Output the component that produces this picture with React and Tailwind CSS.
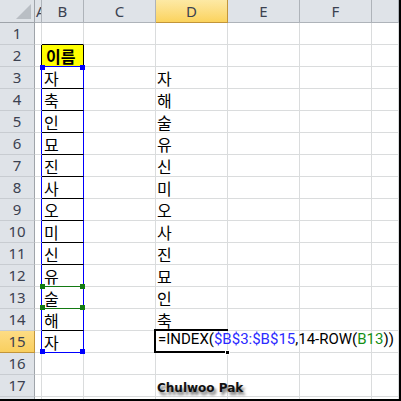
import React from 'react';

const COLS = ['A', 'B', 'C', 'D', 'E', 'F', 'G'];
const colB = { 2: '이름', 3: '자', 4: '축', 5: '인', 6: '묘', 7: '진', 8: '사', 9: '오', 10: '미', 11: '신', 12: '유', 13: '술', 14: '해', 15: '자' };
const colD = { 3: '자', 4: '해', 5: '술', 6: '유', 7: '신', 8: '미', 9: '오', 10: '사', 11: '진', 12: '묘', 13: '인', 14: '축' };

const cellFont = { fontFamily: '"Noto Sans CJK KR", "Noto Sans", sans-serif' };
const uiFont = { fontFamily: '"Noto Sans", sans-serif' };

function Handle({ className }) {
  return <span className={`absolute z-20 h-[5px] w-[5px] ${className}`} />;
}

function Formula() {
  return (
    <span className="relative z-30 whitespace-nowrap text-[15px] leading-none text-black" style={{ fontFamily: 'Roboto, "Noto Sans", "Noto Sans CJK KR", sans-serif' }}>
      =INDEX(<span className="text-[#2b2bff]">$B$3:$B$15</span>,14-ROW(<span className="text-[#168f16]">B13</span>))
    </span>
  );
}

function cellBorder(r, col) {
  if (col === 'A' && r === 2) return 'border-r-black border-b-[#dadcdd]';
  if (col === 'A' && r >= 3 && r <= 15) return 'border-r-[#0000ff] border-b-[#dadcdd]';
  if (col === 'B' && r === 1) return 'border-r-[#dadcdd] border-b-black';
  if (col === 'B' && r === 2) return 'border-r-black border-b-[#0000ff]';
  if (col === 'B' && (r === 12 || r === 13)) return 'border-r-[#0000ff] border-b-[#137a13]';
  if (col === 'B' && r === 15) return 'border-r-[#0000ff] border-b-[#0000ff]';
  if (col === 'B' && r >= 3 && r <= 14) return 'border-r-[#0000ff] border-b-black';
  return 'border-[#dadcdd]';
}

function Cell({ r, col }) {
  let content = null;
  if (col === 'B' && colB[r]) {
    content = (
      <span className={`text-[16px] leading-none ${r === 2 ? 'pl-[4px] font-bold' : 'pl-[2px]'}`} style={cellFont}>
        {colB[r]}
      </span>
    );
  }
  if (col === 'D' && colD[r]) {
    content = (
      <span className="pl-[1px] text-[16px] leading-none" style={cellFont}>
        {colD[r]}
      </span>
    );
  }
  if (col === 'D' && r === 15) content = <span className="pl-[2px]"><Formula /></span>;
  if (col === 'D' && r === 17) {
    content = (
      <span
        className="relative z-10 whitespace-nowrap pl-[1px] text-[12px] font-bold leading-none text-[#111]"
        style={{ fontFamily: '"DejaVu Sans", Tahoma, sans-serif', textShadow: '2px 3px 3px #6b6b6b' }}
      >
        Chulwoo Pak
      </span>
    );
  }

  return (
    <div className={`relative flex items-end border-r border-b pb-[2px] ${cellBorder(r, col)} ${col === 'B' && r === 2 ? 'bg-[#ffff00]' : ''}`}>
      {content}

      {/* range finder handles for $B$3:$B$15 */}
      {col === 'B' && r === 3 && (
        <>
          <Handle className="-left-[2px] -top-[2px] bg-[#0000ff]" />
          <Handle className="-right-[2px] -top-[2px] bg-[#0000ff]" />
        </>
      )}
      {col === 'B' && r === 15 && (
        <>
          <Handle className="-left-[2px] -bottom-[2px] bg-[#0000ff]" />
          <Handle className="-right-[2px] -bottom-[2px] bg-[#0000ff]" />
        </>
      )}

      {/* range finder handles for B13 */}
      {col === 'B' && r === 13 && (
        <>
          <Handle className="-left-[2px] -top-[3px] bg-[#137a13]" />
          <Handle className="-right-[2px] -top-[3px] bg-[#137a13]" />
          <Handle className="-left-[2px] -bottom-[2px] bg-[#137a13]" />
          <Handle className="-right-[2px] -bottom-[2px] bg-[#137a13]" />
        </>
      )}

      {/* active cell (editing, right edge hidden under the text) */}
      {col === 'D' && r === 15 && (
        <>
          <span className="pointer-events-none absolute -bottom-[1px] -left-[2px] -right-[1px] -top-[2px] z-20 border-2 border-r-0 border-black" />
          <span className="absolute -bottom-[3px] -right-[3px] z-30 h-[5px] w-[5px] border border-white bg-black" />
        </>
      )}
    </div>
  );
}

export default function App() {
  const rows = Array.from({ length: 17 }, (_, i) => i + 1);

  return (
    <div className="h-[401px] w-[401px] overflow-hidden border-b-2 border-r-2 border-black bg-white text-black">
      <div className="grid grid-cols-[35px_7px_42px_72px_72px_72px_72px_27px] grid-rows-[23px_repeat(17,22px)_2px]">
        {/* select-all corner */}
        <div className="flex items-end justify-end border-b border-r border-[#9fa4aa] bg-[#dfe3e8] pb-[3px] pr-[3px]">
          <svg width="15" height="15" viewBox="0 0 15 15">
            <polygon points="15,0 15,15 0,15" fill="#b9bec4" />
          </svg>
        </div>

        {/* column headers */}
        {COLS.map((l) => (
          <div
            key={l}
            className={`flex items-center overflow-hidden border-b border-r text-[15px] text-[#3b4150] ${
              l === 'D'
                ? 'border-[#c2953a] bg-gradient-to-b from-[#fde9a4] to-[#fbd35c]'
                : 'border-[#aeb3b9] bg-[#dfe3e8]'
            } ${l === 'A' ? 'justify-start pl-[1px]' : 'justify-center'}`}
            style={uiFont}
          >
            {l === 'G' ? '' : l}
          </div>
        ))}

        {rows.map((r) => (
          <React.Fragment key={r}>
            <div
              className={`flex items-center justify-center border-b border-r text-[15px] text-[#3b4150] ${
                r === 15
                  ? 'border-b-[#c2953a] border-r-[#c2953a] bg-gradient-to-b from-[#fddc84] to-[#f9cf5e]'
                  : 'border-b-[#c8ccd1] border-r-[#9fa4aa] bg-[#dfe3e8]'
              }`}
              style={uiFont}
            >
              {r}
            </div>
            {COLS.map((col) => (
              <Cell key={col} r={r} col={col} />
            ))}
          </React.Fragment>
        ))}

        {/* partial row 18 */}
        <div className="border-r border-[#9fa4aa] bg-[#dfe3e8]" />
        {COLS.map((l) => (
          <div key={`p-${l}`} className="border-r border-[#dadcdd]" />
        ))}
      </div>
    </div>
  );
}
